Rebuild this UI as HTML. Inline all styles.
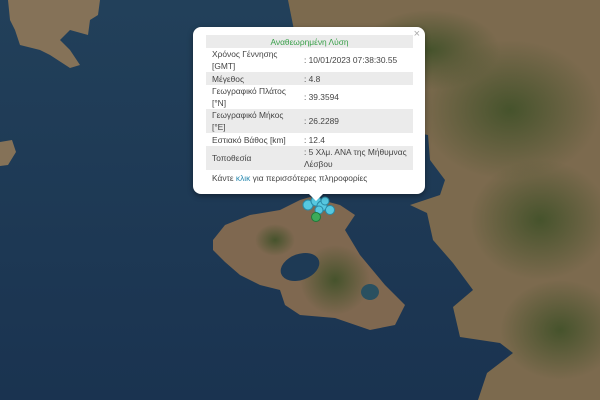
<!DOCTYPE html>
<html><head><meta charset="utf-8"><style>
html,body{margin:0;padding:0;width:600px;height:400px;overflow:hidden;background:#1d3550}
.pop{position:absolute;left:193px;top:27px;width:232px;height:167px;background:#fff;border-radius:8px;box-shadow:0 2px 6px rgba(0,0,0,.4);font-family:"Liberation Sans","DejaVu Sans",sans-serif;font-size:8.4px;color:#444}
.x{position:absolute;right:5px;top:1px;color:#aaa;font-size:11px}
table{position:absolute;left:13px;top:8px;width:207px;border-collapse:collapse}
td{padding:0 2px;line-height:12px;vertical-align:middle}
tr.g td{background:#ebebeb}
.h{text-align:center;color:#3aa04a;height:13px}
.c1{width:88px;padding-left:6px}
tr.s td{height:13px}
tr.d td{height:24px}
.arrow{position:absolute;left:116px;bottom:-7px;width:0;height:0;border-left:7px solid transparent;border-right:7px solid transparent;border-top:7px solid #fff}
.l{position:absolute;left:19px;top:146px}
</style></head><body>
<svg width="600" height="400" style="position:absolute;left:0;top:0">
<defs>
<linearGradient id="sea" x1="0" y1="0" x2="0" y2="1"><stop offset="0" stop-color="#22405a"/><stop offset="1" stop-color="#1a3350"/></linearGradient>
<radialGradient id="gr" cx="0.5" cy="0.5" r="0.5"><stop offset="0" stop-color="#46532c"/><stop offset="1" stop-color="#46532c" stop-opacity="0"/></radialGradient>
</defs>
<rect width="600" height="400" fill="url(#sea)"/>
<polygon fill="#7c6a4e" points="288,0 600,0 600,400 478,400 487,373 513,353 500,343 460,337 453,307 473,290 453,263 433,240 427,213 410,205 440,195 445,180 430,160 428,135 400,130 370,125 330,100 300,60"/>
<ellipse cx="510" cy="110" rx="90" ry="70" fill="url(#gr)"/>
<ellipse cx="430" cy="50" rx="70" ry="40" fill="url(#gr)"/>
<ellipse cx="540" cy="220" rx="70" ry="60" fill="url(#gr)"/>
<ellipse cx="560" cy="330" rx="60" ry="50" fill="url(#gr)"/>
<polygon fill="#857258" points="8,0 100,0 98,15 90,20 88,35 70,30 60,40 70,50 80,65 70,68 50,55 40,50 20,45 15,30 10,20"/>
<polygon fill="#857258" points="0,142 12,140 16,152 8,165 0,166"/>
<polygon fill="#7f6850" points="213,240 225,225 250,215 280,210 300,200 310,197 340,205 355,215 345,230 360,255 385,285 405,305 395,325 370,330 335,318 300,315 285,305 280,290 260,285 240,275 225,262 213,250"/>
<ellipse cx="335" cy="280" rx="35" ry="35" fill="url(#gr)"/>
<ellipse cx="275" cy="240" rx="20" ry="16" fill="url(#gr)"/>
<ellipse cx="300" cy="267" rx="20" ry="13" fill="#1e3a55" transform="rotate(-20 300 267)"/>
<ellipse cx="370" cy="292" rx="9" ry="8" fill="#2a5060"/>
<g fill="#56c8e0" stroke="#2a8aa6" stroke-width="1">
<circle cx="308" cy="205" r="5"/><circle cx="316" cy="201" r="5"/><circle cx="322" cy="206" r="5"/><circle cx="325" cy="201" r="4"/><circle cx="330" cy="210" r="4.5"/><circle cx="319" cy="210" r="4"/>
</g>
<circle cx="316" cy="217" r="4.5" fill="#3dab5a" stroke="#1f7a3a" stroke-width="1"/>
</svg>
<div class="pop"><div class="x">×</div>
<table>
<tr class="g"><td colspan="2" class="h">Αναθεωρημένη Λύση</td></tr>
<tr class="d"><td class="c1">Χρόνος Γέννησης<br>[GMT]</td><td>: 10/01/2023 07:38:30.55</td></tr>
<tr class="g s"><td class="c1">Μέγεθος</td><td>: 4.8</td></tr>
<tr class="d"><td class="c1">Γεωγραφικό Πλάτος<br>[°N]</td><td>: 39.3594</td></tr>
<tr class="g d"><td class="c1">Γεωγραφικό Μήκος<br>[°E]</td><td>: 26.2289</td></tr>
<tr class="s"><td class="c1">Εστιακό Βάθος [km]</td><td>: 12.4</td></tr>
<tr class="g d"><td class="c1">Τοποθεσία</td><td>: 5 Χλμ. ΑΝΑ της Μήθυμνας<br>Λέσβου</td></tr>
</table>
<div class="l">Κάντε <span style="color:#2a8ab0">κλικ</span> για περισσότερες πληροφορίες</div>
<div class="arrow"></div>
</div>
</body></html>
